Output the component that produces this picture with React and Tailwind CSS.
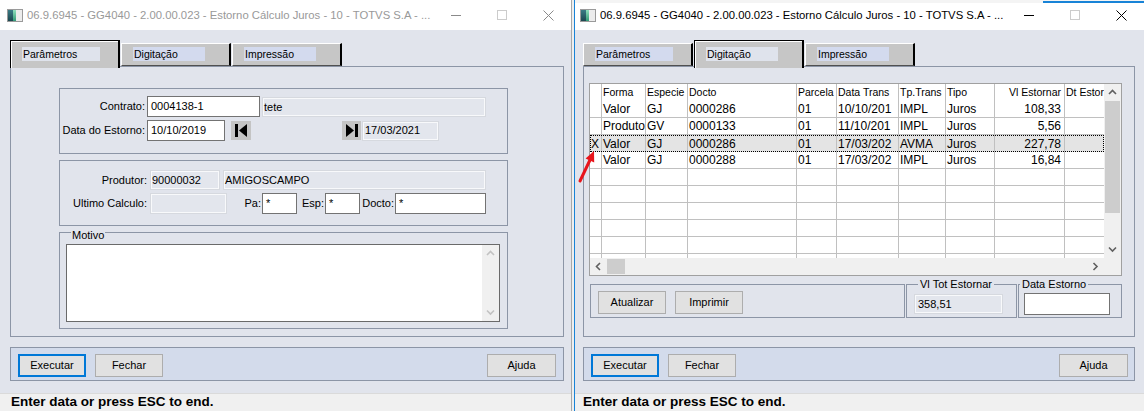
import React from "react";

const TITLE = "06.9.6945 - GG4040 - 2.00.00.023 - Estorno Cálculo Juros - 10 - TOTVS S.A - ...";

const columns = [
  { w: "w-[12px]", label: "" },
  { w: "w-[44px]", label: "Forma" },
  { w: "w-[42px]", label: "Especie" },
  { w: "w-[109px]", label: "Docto" },
  { w: "w-[40px]", label: "Parcela" },
  { w: "w-[62px]", label: "Data Trans" },
  { w: "w-[47px]", label: "Tp.Trans" },
  { w: "w-[49px]", label: "Tipo" },
  { w: "w-[70px]", label: "Vl Estornar", right: true },
  { w: "w-[80px]", label: "Dt Estornado" },
];

const rows = [
  ["", "Valor", "GJ", "0000286", "01", "10/10/201", "IMPL", "Juros", "108,33", ""],
  ["", "Produtor", "GV", "0000133", "01", "11/10/201", "IMPL", "Juros", "5,56", ""],
  ["X", "Valor", "GJ", "0000286", "01", "17/03/202", "AVMA", "Juros", "227,78", ""],
  ["", "Valor", "GJ", "0000288", "01", "17/03/202", "IMPL", "Juros", "16,84", ""],
];

function AppIcon() {
  return (
    <div className="flex h-[13px] w-[16px] border border-[#9a9a9a] bg-[#ececec]">
      <div className="w-[5px] bg-linear-to-b from-[#3b7c86] to-[#1c4750]" />
      <div className="w-[3px] bg-linear-to-b from-[#8fe0bd] to-[#2f9a76]" />
      <div className="flex-1" />
    </div>
  );
}

function TitleBar({ active }) {
  const ink = active ? "#000000" : "#8a8a8a";
  return (
    <div className={active ? "flex h-[27px] items-center bg-white pb-[3px]" : "flex h-[30px] items-center bg-white"}>
      <div className={active ? "ml-[5px]" : "ml-[7px]"}>
        <AppIcon />
      </div>
      <span className={active ? "ml-[4px] text-[11.3px] text-black" : "ml-[4px] text-[11.3px] text-[#999999]"}>{TITLE}</span>
      <div className="ml-auto flex h-full">
        <div className="flex w-[46px] items-center justify-center">
          <div className={active ? "h-px w-[10px] bg-black" : "h-px w-[10px] bg-[#8a8a8a]"} />
        </div>
        <div className="flex w-[46px] items-center justify-center">
          <div className="h-[10px] w-[10px] border border-[#cccccc]" />
        </div>
        <div className="flex w-[46px] items-center justify-center">
          <svg width="11" height="11" viewBox="0 0 11 11">
            <path d="M0.5 0.5 L10.5 10.5 M10.5 0.5 L0.5 10.5" stroke={ink} strokeWidth="1" />
          </svg>
        </div>
      </div>
    </div>
  );
}

function Tabs({ active }) {
  const tabs = [
    ["Parâmetros", "w-[78px]"],
    ["Digitação", "w-[72px]"],
    ["Impressão", "w-[72px]"],
  ];
  return (
    <div className="relative z-10 flex h-[26px] gap-[1px]">
      {tabs.map(([label, w], i) =>
        i === active ? (
          <div
            key={label}
            className="h-[28px] w-[110px] border-t border-r-2 border-l border-black bg-[#c6c6c6] pt-[6px] pl-[11px] shadow-[inset_1px_1px_0_#ffffff]"
          >
            <div className={`h-[14px] ${w} bg-[#dfe3ec] pl-[1px] text-[10.5px] leading-[14px]`}>{label}</div>
          </div>
        ) : (
          <div
            key={label}
            className="mt-[3px] h-[23px] w-[110px] border-t border-l border-white border-r-2 border-r-black border-b border-b-[#505050] bg-[#c6c6c6] pt-[3px] pl-[11px]"
          >
            <div className={`h-[14px] ${w} bg-[#d3daee] pl-[1px] text-[10.5px] leading-[14px]`}>{label}</div>
          </div>
        )
      )}
    </div>
  );
}

function Input({ className = "", children }) {
  return (
    <div className={`flex h-[21px] items-center border border-[#737373] bg-white pl-[3px] ${className}`}>{children}</div>
  );
}

function ReadOnly({ className = "", children }) {
  return (
    <div
      className={`flex h-[20px] items-center border border-[#d6d9df] bg-[#e3e6ed] pl-[1px] shadow-[inset_0_0_0_1px_#f8f9fb] ${className}`}
    >
      {children}
    </div>
  );
}

function NavButton({ last, className = "" }) {
  return (
    <div className={`flex h-[19px] items-center justify-center bg-[#c4c4c4] ${className}`}>
      <svg width="12" height="13" viewBox="0 0 12 13">
        {last ? (
          <>
            <path d="M0 0 L8 6.5 L0 13 Z" fill="#000" />
            <rect x="9" y="0" width="3" height="13" fill="#000" />
          </>
        ) : (
          <>
            <rect x="0" y="0" width="3" height="13" fill="#000" />
            <path d="M12 0 L4 6.5 L12 13 Z" fill="#000" />
          </>
        )}
      </svg>
    </div>
  );
}

function Button({ primary, className = "", children }) {
  return (
    <div
      className={
        primary
          ? `flex h-[23px] w-[68px] items-center justify-center border-2 border-[#0078d7] bg-[#e1e1e1] text-[11px] ${className}`
          : `flex h-[23px] w-[68px] items-center justify-center border border-[#adadad] bg-[#e1e1e1] text-[11px] ${className}`
      }
    >
      {children}
    </div>
  );
}

function Chevron({ dir, color = "#606060" }) {
  const d = {
    up: "M1 5 L4.5 1.5 L8 5",
    down: "M1 1.5 L4.5 5 L8 1.5",
    left: "M5 1 L1.5 4.5 L5 8",
    right: "M1.5 1 L5 4.5 L1.5 8",
  }[dir];
  const vertical = dir === "up" || dir === "down";
  return (
    <svg width={vertical ? 9 : 7} height={vertical ? 7 : 9} viewBox={vertical ? "0 0 9 7" : "0 0 7 9"}>
      <path d={d} fill="none" stroke={color} strokeWidth="1.6" />
    </svg>
  );
}

function ParamsPanel() {
  return (
    <div className="h-[271px] border border-[#8c95a6] pt-[21px] pl-[48px]">
      <div className="h-[66px] w-[449px] border border-[#8c95a6] pt-[7px]">
        <div className="flex h-[21px] items-center">
          <span className="w-[85px] text-right">Contrato:</span>
          <Input className="ml-[2px] w-[113px]">0004138-1</Input>
          <ReadOnly className="ml-[2px] w-[224px] self-end">tete</ReadOnly>
        </div>
        <div className="mt-[3px] flex h-[21px] items-center">
          <span className="w-[85px] text-right">Data do Estorno:</span>
          <Input className="ml-[2px] w-[78px]">10/10/2019</Input>
          <NavButton className="ml-[6px] w-[20px]" />
          <NavButton last className="ml-[91px] w-[19px]" />
          <ReadOnly className="ml-[1px] w-[77px] pl-[2px]">17/03/2021</ReadOnly>
        </div>
      </div>

      <div className="mt-[6px] h-[66px] w-[449px] border border-[#8c95a6] pt-[9px]">
        <div className="flex h-[20px] items-center">
          <span className="w-[87px] text-right">Produtor:</span>
          <ReadOnly className="ml-[3px] w-[70px]">90000032</ReadOnly>
          <ReadOnly className="ml-[3px] w-[263px]">AMIGOSCAMPO</ReadOnly>
        </div>
        <div className="mt-[3px] flex h-[21px] items-center">
          <span className="w-[87px] text-right">Ultimo Calculo:</span>
          <ReadOnly className="ml-[3px] h-[21px] w-[77px]" />
          <span className="ml-[13px] w-[21px] text-right">Pa:</span>
          <Input className="ml-[1px] w-[35px]">*</Input>
          <span className="w-[27px] text-right">Esp:</span>
          <Input className="ml-[1px] w-[35px]">*</Input>
          <span className="w-[34px] text-right">Docto:</span>
          <Input className="ml-[1px] w-[91px]">*</Input>
        </div>
      </div>

      <div className="relative mt-[6px] h-[97px] w-[449px] border border-[#8c95a6] pt-[11px] pl-[6px]">
        <span className="absolute -top-[4px] left-[11px] bg-[#e1e4ec] px-[1px] leading-[12px]">Motivo</span>
        <div className="flex h-[78px] w-[434px] border border-[#6a6a6a] bg-white">
          <div className="flex-1" />
          <div className="flex w-[17px] flex-col items-center justify-between bg-[#f0f0f0] py-[5px]">
            <Chevron dir="up" color="#c2c2c2" />
            <Chevron dir="down" color="#c2c2c2" />
          </div>
        </div>
      </div>
    </div>
  );
}

function Grid() {
  return (
    <div className="h-[193px] w-[533px] border border-[#a0a0a0] bg-white">
      <div className="flex h-[174px]">
        <div className="h-full w-[514px] overflow-hidden">
          <div className="flex h-[17px]">
            {columns.map((c, i) => (
              <div
                key={i}
                className={`flex shrink-0 items-center overflow-hidden border-r border-[#c0c0c0] text-[10.5px] whitespace-nowrap ${c.w} ${
                  c.right ? "justify-end pr-[3px]" : "pl-[1px]"
                }`}
              >
                {c.label}
              </div>
            ))}
          </div>
          {[...rows, ...Array(6).fill(null)].map((r, ri) => (
            <div
              key={ri}
              className={
                ri === 2
                  ? "flex h-[17px] bg-[#e4e4e4] outline-1 -outline-offset-1 outline-black outline-dotted"
                  : "flex h-[17px] border-b border-[#c0c0c0]"
              }
            >
              {columns.map((c, i) => (
                <div
                  key={i}
                  className={`flex shrink-0 items-center overflow-hidden border-r border-[#c0c0c0] text-[12px] whitespace-nowrap ${c.w} ${
                    c.right ? "justify-end pr-[3px]" : "pl-[1px]"
                  }`}
                >
                  {r ? r[i] : ""}
                </div>
              ))}
            </div>
          ))}
        </div>
        <div className="flex w-[17px] flex-col bg-[#f0f0f0]">
          <div className="flex h-[17px] items-center justify-center">
            <Chevron dir="up" />
          </div>
          <div className="mx-px h-[112px] bg-[#cdcdcd]" />
          <div className="mt-auto flex h-[17px] items-center justify-center">
            <Chevron dir="down" />
          </div>
        </div>
      </div>
      <div className="flex h-[17px] bg-[#f0f0f0]">
        <div className="flex w-[17px] items-center justify-center">
          <Chevron dir="left" />
        </div>
        <div className="my-px w-[18px] bg-[#cdcdcd]" />
        <div className="ml-auto flex w-[17px] items-center justify-center">
          <Chevron dir="right" />
        </div>
        <div className="w-[17px]" />
      </div>
    </div>
  );
}

function GridPanel() {
  return (
    <div className="h-[271px] border border-[#8c95a6] pt-[16px] pl-[5px]">
      <Grid />
      <div className="mt-[8px] ml-[1px] flex h-[34px] gap-[1px]">
        <div className="flex w-[315px] gap-[9px] border border-[#8c95a6] pt-[6px] pl-[7px]">
          <Button className="h-[22px]">Atualizar</Button>
          <Button className="h-[22px]">Imprimir</Button>
        </div>
        <div className="relative w-[111px] border border-[#8c95a6] pt-[9px] pl-[7px]">
          <span className="absolute -top-[7px] left-[11px] bg-[#e1e4ec] px-[2px] leading-[12px]">Vl Tot Estornar</span>
          <ReadOnly className="w-[89px] pl-[3px]">358,51</ReadOnly>
        </div>
        <div className="relative w-[104px] border border-[#8c95a6] pt-[8px] pl-[5px]">
          <span className="absolute -top-[7px] left-[1px] bg-[#e1e4ec] px-[2px] leading-[12px]">Data Estorno</span>
          <Input className="h-[22px] w-[86px]" />
        </div>
      </div>
    </div>
  );
}

function ButtonBar({ pad }) {
  return (
    <div className={`mt-[10px] flex h-[34px] border border-[#8c95a6] bg-[#d3dbeb] pt-[6px] ${pad}`}>
      <Button primary>Executar</Button>
      <Button className="ml-[9px]">Fechar</Button>
      <Button className="ml-auto w-[69px]">Ajuda</Button>
    </div>
  );
}

function StatusBar({ pad }) {
  return (
    <div className={`flex h-[18px] items-center border-t border-[#dadada] bg-[#f0f0f0] text-[13.5px] font-bold ${pad}`}>
      Enter data or press ESC to end.
    </div>
  );
}

export default function App() {
  return (
    <div className="relative flex h-[411px] w-[1144px] overflow-hidden bg-[#f0f0f0] font-['Liberation_Sans',Arial,sans-serif] text-[11px] text-black">
      <div className="flex w-[571px] shrink-0 flex-col">
        <TitleBar />
        <div className="h-[363px] bg-[#e1e4ec] pt-[10px] pr-[7px] pl-[10px]">
          <Tabs active={0} />
          <ParamsPanel />
          <ButtonBar pad="pl-[7px] pr-[7px]" />
        </div>
        <StatusBar pad="pl-[11px]" />
      </div>

      <div className="w-[3px] shrink-0 border-l border-[#a8a8a8] bg-[#eeeeee]" />

      <div className="flex w-[570px] shrink-0 flex-col border-l border-[#1883d7]">
        <div className="flex h-[3px] overflow-hidden bg-[#f4f4f4]">
          <span className="-mt-[11px] ml-[128px] text-[13px] leading-[14px] whitespace-nowrap text-[#333333]">
            Nome: COOPERATIVA AMIGOS DO CAMPO COM. LTDA
          </span>
          <div className="ml-[4px] flex-1 self-end border-b-2 border-[#1883d7]" />
        </div>
        <TitleBar active />
        <div className="h-[363px] bg-[#e1e4ec] pt-[10px] pr-[9px] pl-[8px]">
          <Tabs active={1} />
          <GridPanel />
          <ButtonBar pad="pl-[7px] pr-[6px]" />
        </div>
        <StatusBar pad="pl-[8px]" />
      </div>

      <svg className="absolute top-[148px] left-[575px]" width="24" height="36" viewBox="0 0 24 36">
        <line x1="5" y1="33" x2="15" y2="12" stroke="#e8141b" strokeWidth="3" strokeLinecap="round" />
        <path d="M19 3 L19.2 14.5 L10.6 10.6 Z" fill="#e8141b" />
      </svg>
    </div>
  );
}
